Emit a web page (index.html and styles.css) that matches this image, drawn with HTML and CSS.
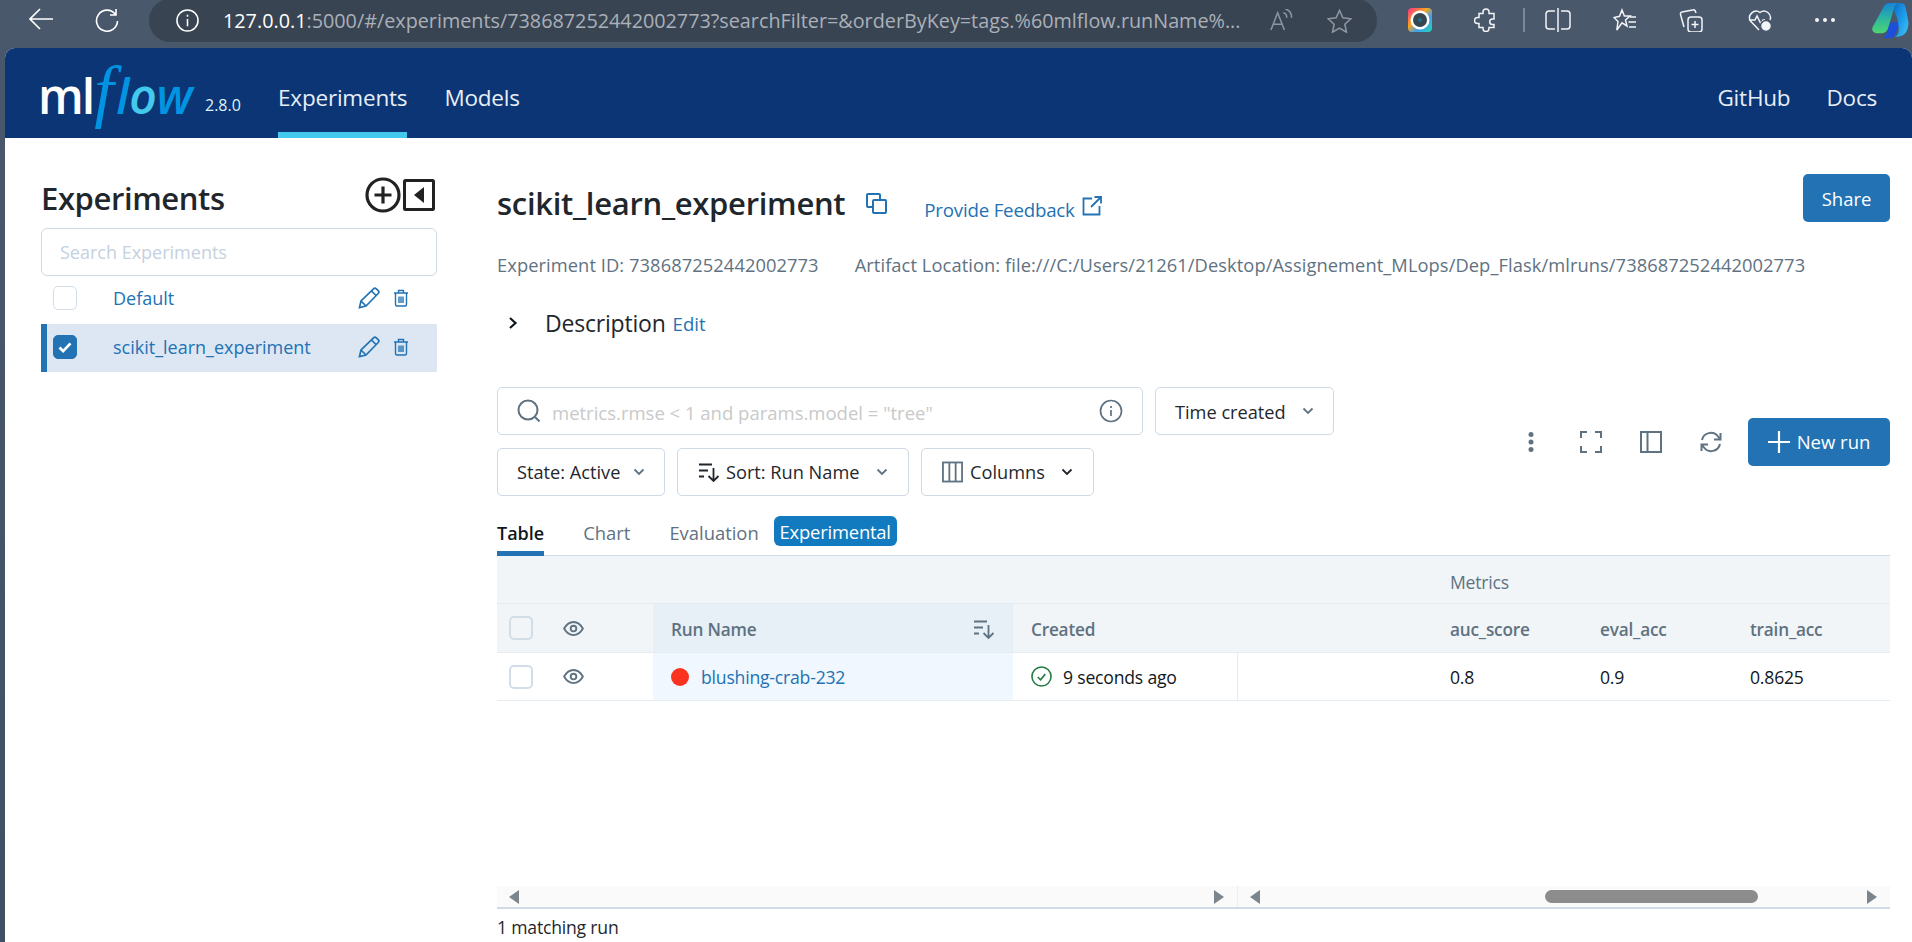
FILE: index.html
```html
<!DOCTYPE html>
<html lang="en">
<head>
<meta charset="utf-8">
<title>MLflow</title>
<link rel="stylesheet" href="styles.css">
</head>
<body>
<div class="chrome">
  <svg class="cicon back" viewBox="0 0 24 22"><path d="M24 11H1M11 1 1 11l10 10"/></svg>
  <svg class="cicon reload" viewBox="0 0 24 24"><path d="M20.5 6.5A10.5 10.5 0 1 0 22.5 13M21 1v6h-6"/></svg>
  <div class="pill">
    <svg class="cicon info" viewBox="0 0 24 24"><circle cx="12" cy="12" r="11"/><path d="M12 10.5V18M12 6v2"/></svg>
    <div class="url"><span class="host">127.0.0.1</span>:5000/#/experiments/738687252442002773?searchFilter=&amp;orderByKey=tags.%60mlflow.runName%...</div>
    <svg class="cicon dim readaloud" viewBox="0 0 24 24"><path d="M1 22 8 4l7 18M3.500 16h9M14 4c2 .5 3.500 2.500 3.500 5M16 0c4 1 6.500 4.500 6.500 9"/></svg>
    <svg class="cicon dim star" viewBox="0 0 26 25"><path d="m13 1.500 3.500 7.700 8.300 1-6.200 5.700 1.700 8.300-7.300-4.200-7.300 4.200 1.700-8.300L1.200 10.200l8.300-1z"/></svg>
  </div>
  <div class="exts">
    <svg class="ext" viewBox="0 0 24 24">
      <defs><linearGradient id="rb" x1="0" y1="0" x2="1" y2="1"><stop offset="0" stop-color="#ff2d8a"/><stop offset=".4" stop-color="#f9a61a"/><stop offset=".65" stop-color="#3fa0f0"/><stop offset="1" stop-color="#1fd8b0"/></linearGradient></defs>
      <rect width="24" height="24" rx="4" fill="url(#rb)"/><circle cx="12" cy="12" r="9.500" fill="#fff"/><circle cx="12" cy="12" r="7" fill="#37474f"/><circle cx="12" cy="12" r="2" fill="#1a6f8f"/>
    </svg>
    <svg class="ext line" viewBox="0 0 24 24"><path d="M9 4.500a3 3 0 1 1 6 0V6h5v5.500h-1.500a2.800 2.800 0 1 0 0 5.600H20V20h-5v1a3 3 0 1 1-6 0v-1H5v-4H3.500a3 3 0 1 1 0-6H5V6h4z" transform="translate(0 -.5)"/></svg>
    <span class="sep"></span>
    <svg class="ext line wide" viewBox="0 0 26 24"><path d="M13 0v24M10 3H4a3 3 0 0 0-3 3v12a3 3 0 0 0 3 3h6M16 3h6a3 3 0 0 1 3 3v12a3 3 0 0 1-3 3h-6"/></svg>
    <svg class="ext line" viewBox="0 0 24 24"><path d="m9 2 2.400 6H17l-4.500 4L14 18l-5-3.200L3.800 22l1.200-8.500L1 9.500l5.500-1.200zM17 9h6M15.500 14H23M16 19h7"/></svg>
    <svg class="ext line" viewBox="0 0 24 24"><rect x="9" y="9" width="14" height="15" rx="3"/><path d="M16 13v7M12.500 16.500h7M17 5l-1-2.500A2 2 0 0 0 13.500 2L3 4a2 2 0 0 0-1.500 2.500L5 19"/></svg>
    <svg class="ext line heart" viewBox="0 0 24 24"><path d="M11 22 2.500 13A6.500 6.500 0 0 1 12 4.500 6.500 6.500 0 0 1 22 12M1 12h6l2-4 4 8 2-4h2"/><circle class="fillw" cx="18" cy="18" r="5.500"/></svg>
    <div class="dots"><i></i><i></i><i></i></div>
    <svg class="copilot" viewBox="0 0 38 36">
      <defs>
        <linearGradient id="c1" x1="0" y1="0" x2="0" y2="1"><stop offset="0" stop-color="#1583d8"/><stop offset=".5" stop-color="#2cb5a0"/><stop offset="1" stop-color="#4fd672"/></linearGradient>
        <linearGradient id="c2" x1="0" y1="0" x2="1" y2="1"><stop offset="0" stop-color="#0c6fc4"/><stop offset=".5" stop-color="#1c9bea"/><stop offset="1" stop-color="#45c3f5"/></linearGradient>
      </defs>
      <path fill="#1d4fd8" d="M15 20h14l-4 11c-1 3-3 5-6 5h-8c3-1 4-3 5-6z"/>
      <path fill="url(#c1)" d="M13 3c1-2 3-3 6-3h9c-3 1-4 3-5 6l-6 20c-1 3-3 5-6 5H5c-3 0-5-3-4-6z"/>
      <path fill="url(#c2)" d="M28 0c4 0 6 1 7 4l3 16c0 7-3 13-8 14-2 1-4 1-6 1 3-2 4-4 4-8 0-5-1-9-2-12l-3-8c0-3 2-6 5-7z"/>
    </svg>
  </div>
</div>

<div class="page">
  <header class="topbar">
    <div class="logo"><span class="ml">ml</span><span class="flow"><span class="flow-f">f</span>l<span class="flow-o">o</span>w</span></div>
    <span class="version">2.8.0</span>
    <nav class="nav">
      <a class="nav-link active">Experiments</a>
      <a class="nav-link">Models</a>
    </nav>
    <nav class="nav-right">
      <a class="nav-link">GitHub</a>
      <a class="nav-link">Docs</a>
    </nav>
  </header>

  <div class="content">
    <aside class="sidebar">
      <div class="side-head">
        <h1 class="side-title">Experiments</h1>
        <svg class="side-plus" viewBox="0 0 36 36"><circle cx="18" cy="18" r="16" /><path d="M18 9.500v17M9.500 18h17"/></svg>
        <svg class="side-collapse" viewBox="0 0 32 32"><rect x="1.500" y="1.500" width="29" height="29" rx="1"/><path class="solid" d="M21 8v16l-10-8z"/></svg>
      </div>
      <div class="side-search">Search Experiments</div>
      <div class="exp-row">
        <span class="check"></span>
        <a class="exp-name">Default</a>
        <svg class="pencil" viewBox="0 0 22 22"><path d="M1.500 20.500 3 14 15.500 1.800a2 2 0 0 1 2.800 0l1.900 1.900a2 2 0 0 1 0 2.800L8 19zM3 14l5 5M13.500 4l4.500 4.500"/></svg>
        <svg class="trash" viewBox="0 0 16 18"><path d="M1 4h14M5.500 4V1.500h5V4M2.500 4v11.500a1.500 1.500 0 0 0 1.500 1.500h8a1.500 1.500 0 0 0 1.500-1.500V4M6 7.500V14M8 7.500V14M10 7.500V14"/></svg>
      </div>
      <div class="exp-row selected">
        <span class="check checked"><svg viewBox="0 0 24 24"><path d="m6 12.500 4 4 8-8.500"/></svg></span>
        <a class="exp-name">scikit_learn_experiment</a>
        <svg class="pencil" viewBox="0 0 22 22"><path d="M1.500 20.500 3 14 15.500 1.800a2 2 0 0 1 2.800 0l1.900 1.900a2 2 0 0 1 0 2.800L8 19zM3 14l5 5M13.500 4l4.500 4.500"/></svg>
        <svg class="trash" viewBox="0 0 16 18"><path d="M1 4h14M5.500 4V1.500h5V4M2.500 4v11.500a1.500 1.500 0 0 0 1.500 1.500h8a1.500 1.500 0 0 0 1.500-1.500V4M6 7.500V14M8 7.500V14M10 7.500V14"/></svg>
      </div>
    </aside>

    <main class="main">
      <div class="exp-head">
        <h2 class="exp-title">scikit_learn_experiment</h2>
        <svg class="copy" viewBox="0 0 21 21"><rect x="1" y="1" width="13" height="13" rx="1"/><rect x="7" y="7" width="13" height="13" rx="1" /></svg>
        <a class="feedback">Provide Feedback</a>
        <svg class="external" viewBox="0 0 20 20"><path d="M10 2.500H1.500v16h16V10M12.500 1H19v6.500M19 1 9 11"/></svg>
        <button class="btn-primary share">Share</button>
      </div>
      <div class="meta">
        <span>Experiment ID: 738687252442002773</span>
        <span>Artifact Location: file:///C:/Users/21261/Desktop/Assignement_MLops/Dep_Flask/mlruns/738687252442002773</span>
      </div>
      <div class="desc">
        <svg class="chev-right" viewBox="0 0 12 14"><path d="m3 2 5.500 5L3 12"/></svg>
        <span class="desc-label">Description</span>
        <a class="desc-edit">Edit</a>
      </div>

      <div class="controls">
        <div class="control-rows">
          <div class="control-row">
            <div class="search">
              <svg class="search-ico" viewBox="0 0 24 24"><circle cx="11" cy="11" r="9.500"/><path d="m18 18 4.500 4.500"/></svg>
              <span class="search-ph">metrics.rmse &lt; 1 and params.model = "tree"</span>
              <svg class="search-info" viewBox="0 0 24 24"><circle cx="12" cy="12" r="10.500"/><path d="M12 11v6M12 7v2"/></svg>
            </div>
            <div class="select time"><span>Time created</span><svg class="chev" viewBox="0 0 12 8"><path d="m1.500 1.500 4.500 4.500 4.500-4.500"/></svg></div>
          </div>
          <div class="control-row">
            <div class="select state"><span>State: Active</span><svg class="chev" viewBox="0 0 12 8"><path d="m1.500 1.500 4.500 4.500 4.500-4.500"/></svg></div>
            <div class="select sort">
              <svg class="sort-ico" viewBox="0 0 22 20"><path d="M1 2.500h13M1 8.500h9M1 14.500h5M15.500 6v13M10.500 14l5 5 5-5"/></svg>
              <span>Sort: Run Name</span><svg class="chev" viewBox="0 0 12 8"><path d="m1.500 1.500 4.500 4.500 4.500-4.500"/></svg>
            </div>
            <div class="select columns">
              <svg class="col-ico" viewBox="0 0 22 22"><rect x="1" y="1" width="20" height="20"/><path d="M7.700 1v20M14.300 1v20"/></svg>
              <span>Columns</span><svg class="chev dark" viewBox="0 0 12 8"><path d="m1.500 1.500 4.500 4.500 4.500-4.500"/></svg>
            </div>
          </div>
        </div>
        <div class="tools">
          <svg class="tool dotsv" viewBox="0 0 6 20"><circle cx="3" cy="2.500" r="2.500"/><circle cx="3" cy="10" r="2.500"/><circle cx="3" cy="17.500" r="2.500"/></svg>
          <svg class="tool" viewBox="0 0 22 22"><path d="M1 7V1h6M15 1h6v6M21 15v6h-6M7 21H1v-6"/></svg>
          <svg class="tool" viewBox="0 0 22 22"><rect x="1" y="1" width="20" height="20"/><path d="M7.500 1v20"/></svg>
          <svg class="tool" viewBox="0 0 22 22"><path d="M2 9a9 9 0 0 1 16-3.500L20 8M20 13a9 9 0 0 1-16 3.500L2 14M20.500 2v6.500H14M1.500 20v-6.500H8"/></svg>
          <button class="btn-primary new-run"><svg class="plus" viewBox="0 0 22 22"><path d="M11 0v22M0 11h22"/></svg>New run</button>
        </div>
      </div>

      <div class="tabs">
        <a class="tab active">Table</a>
        <a class="tab">Chart</a>
        <a class="tab">Evaluation</a>
        <span class="badge">Experimental</span>
      </div>

      <div class="table">
        <div class="trow group">
          <div class="cell span-blank"></div>
          <div class="cell metric">Metrics</div>
          <div class="cell"></div>
          <div class="cell"></div>
        </div>
        <div class="trow head">
          <div class="cell first"><span class="check box"></span><svg class="eye" viewBox="0 0 22 16"><path d="M1 8c2.500-4.500 6-7 10-7s7.500 2.500 10 7c-2.500 4.500-6 7-10 7S3.500 12.500 1 8z"/><circle cx="11" cy="8" r="3"/></svg></div>
          <div class="cell runname head-sel">Run Name<svg class="sort-mini" viewBox="0 0 22 20"><path d="M1 2.500h13M1 8.500h9M1 14.500h5M15.500 6v13M10.500 14l5 5 5-5"/></svg></div>
          <div class="cell runname">Created</div>
          <div class="cell"></div>
          <div class="cell metric">auc_score</div>
          <div class="cell metric">eval_acc</div>
          <div class="cell metric">train_acc</div>
        </div>
        <div class="trow body">
          <div class="cell first"><span class="check box"></span><svg class="eye" viewBox="0 0 22 16"><path d="M1 8c2.500-4.500 6-7 10-7s7.500 2.500 10 7c-2.500 4.500-6 7-10 7S3.500 12.500 1 8z"/><circle cx="11" cy="8" r="3"/></svg></div>
          <div class="cell runname body-sel"><span class="dot"></span><a class="run-link">blushing-crab-232</a></div>
          <div class="cell runname created"><svg class="ok" viewBox="0 0 22 22"><circle cx="11" cy="11" r="10"/><path d="m7 11.500 3 3 5-6"/></svg>9 seconds ago</div>
          <div class="cell"></div>
          <div class="cell metric">0.8</div>
          <div class="cell metric">0.9</div>
          <div class="cell metric">0.8625</div>
        </div>
        <div class="table-fill"></div>
        <div class="scrollbars">
          <div class="sb sb-left"><span class="arr arr-l"></span><span class="arr arr-r"></span></div>
          <div class="sb sb-right"><span class="arr arr-l"></span><span class="thumb"></span><span class="arr arr-r"></span></div>
        </div>
      </div>
      <div class="footer">1 matching run</div>
    </main>
  </div>
</div>
</body>
</html>
```
FILE: styles.css
```css
* { box-sizing: border-box; }
html, body { height: 100%; }
body {
  margin: 0;
  height: 100vh;
  overflow: hidden;
  display: flex;
  flex-direction: column;
  background: linear-gradient(#4a586c, #3f5066);
  font-family: "Open Sans", "Noto Sans", sans-serif;
  font-size: 15px;
  color: #11171c;
}
a { color: #2272b4; text-decoration: none; }
h1, h2 { margin: 0; }

/* browser chrome */
.chrome { height: 48px; flex: none; display: flex; align-items: flex-start; }
.cicon { fill: none; stroke: #fff; stroke-width: 1.6; flex: none; }
.cicon.dim { stroke: #8f96a0; }
.back { width: 24px; height: 22px; margin: 8px 0 0 29px; }
.reload { width: 24px; height: 24px; margin: 8px 0 0 42px; }
.pill {
  width: 1228px; height: 43px; margin: -1px 0 0 30px;
  background: #394453;
  border-radius: 21px;
  display: flex; align-items: center;
}
.info { width: 23px; height: 23px; margin-left: 27px; }
.url { margin-left: 24px; width: 1022px; flex: none; font-size: 19.800px; color: #aab0b8; white-space: nowrap; overflow: hidden; }
.host { color: #fff; }
.readaloud { width: 23px; height: 23px; margin-left: 25px; }
.star { width: 25px; height: 24px; margin-left: 34px; }
.exts { display: flex; align-items: center; height: 40px; margin-left: 31px; gap: 42px; }
.ext { width: 24px; height: 24px; flex: none; }
.ext.wide { width: 26px; }
.ext.line { fill: none; stroke: #f2f4f6; stroke-width: 1.5; }
.ext .fillw { fill: #f2f4f6; stroke: #4a586c; }
.ext.heart { margin-left: 3px; }
.sep { width: 2px; height: 24px; background: #7d8896; margin: 0 -22px 0 -17px; flex: none; }
.dots { display: flex; gap: 4px; width: 22px; margin-left: 1px; }
.dots i { width: 4px; height: 4px; border-radius: 50%; background: #f2f4f6; }
.copilot { width: 38px; height: 35px; margin-left: -8px; flex: none; }

/* page */
.page { flex: 1; min-height: 0; margin-left: 5px; background: #fff; border-radius: 10px 10px 0 0; display: flex; flex-direction: column; overflow: hidden; }
.topbar { height: 90px; flex: none; background: #0b3574; display: flex; align-items: stretch; padding: 0 35px 0 36px; color: #fff; }
.logo { width: 167px; margin-left: -3px; display: flex; align-items: baseline; margin-top: 6px; font-size: 48px; line-height: 84px; white-space: nowrap; }
.ml { font-weight: 600; color: #fff; letter-spacing: -2px; }
.flow { font-style: italic; font-weight: 600; color: #0194e2; letter-spacing: -.3px; margin-left: 1px; }
.flow-f { font-family: "Liberation Serif", serif; font-size: 70px; line-height: 0; font-weight: 400; margin-right: 3px; }
.flow-o { color: #43c9ed; }
.version { font-size: 16px; color: #dff3fc; align-self: center; margin: 24px 0 0 0; width: 73px; }
.nav { display: flex; gap: 37px; }
.nav-right { display: flex; gap: 36px; margin-left: auto; }
.nav-link { color: #e8eef6; font-size: 22.500px; display: flex; align-items: center; border-bottom: 6px solid transparent; padding-top: 14px; letter-spacing: -.2px; }
.nav-link.active { border-bottom-color: #43c9ed; }

.content { flex: 1; min-height: 0; display: flex; }

/* sidebar */
.sidebar { width: 492px; flex: none; padding: 39px 60px 0 36px; }
.side-head { display: flex; align-items: center; height: 36px; }
.side-title { font-size: 31px; font-weight: 600; color: #1f272d; flex: 1; letter-spacing: -.4px; margin-top: 6px; }
.side-plus { width: 36px; height: 36px; fill: none; stroke: #222; stroke-width: 3.200; flex: none; }
.side-collapse { width: 32px; height: 32px; fill: none; stroke: #222; stroke-width: 3; margin: 0 2px 0 2px; flex: none; }
.side-collapse .solid { fill: #222; stroke: none; }
.side-search { height: 48px; margin-top: 15px; border: 1px solid #cdd9e5; border-radius: 6px; padding: 0 18px; display: flex; align-items: center; color: #c4d1de; font-size: 18px; }
.exp-row { height: 48px; display: flex; align-items: center; padding: 0 28px 4px 12px; font-size: 18px; }
.exp-row.selected { background: #dce7f3; border-left: 6px solid #2272b4; padding: 0 28px 2px 6px; }
.check { width: 24px; height: 24px; border: 1.500px solid #d3dde7; border-radius: 5px; background: #fff; flex: none; display: flex; }
.check.checked { background: #2272b4; border-color: #2272b4; }
.check svg { fill: none; stroke: #fff; stroke-width: 3; width: 100%; height: 100%; }
.exp-name { flex: 1; margin-left: 36px; }
.pencil { width: 22px; height: 22px; fill: none; stroke: #2272b4; stroke-width: 1.700; flex: none; }
.trash { width: 16px; height: 18px; fill: none; stroke: #2272b4; stroke-width: 1.400; margin-left: 13px; flex: none; }

/* main */
.main { flex: 1; min-width: 0; padding-right: 22px; display: flex; flex-direction: column; }
.exp-head { display: flex; align-items: center; height: 48px; margin-top: 36px; }
.exp-title { font-size: 31px; font-weight: 600; color: #1f272d; letter-spacing: -.3px; margin-top: 10px; }
.copy { width: 21px; height: 21px; fill: #fff; stroke: #2272b4; stroke-width: 2; margin: 10px 0 0 21px; flex: none; }
.feedback { margin: 22px 0 0 37px; font-size: 18.700px; letter-spacing: -.2px; }
.external { width: 20px; height: 20px; fill: none; stroke: #2272b4; stroke-width: 1.800; margin: 16px 0 0 7px; flex: none; }
.btn-primary { background: #2272b4; color: #fff; border: 0; border-radius: 5px; font-family: inherit; font-size: 18.500px; display: flex; align-items: center; justify-content: center; }
.share { width: 87px; height: 48px; margin-left: auto; }
.meta { height: 22px; margin-top: 31px; display: flex; gap: 36px; align-items: center; color: #5f7281; font-size: 18.300px; letter-spacing: .08px; white-space: nowrap; }
.desc { height: 24px; margin-top: 36px; display: flex; align-items: center; }
.chev-right { width: 12px; height: 14px; fill: none; stroke: #11171c; stroke-width: 2.200; margin-left: 10px; }
.desc-label { font-size: 23px; margin-left: 26px; letter-spacing: -.2px; color: #1f272d; }
.desc-edit { font-size: 18.500px; margin-left: 7px; }

.controls { margin-top: 52px; height: 109px; display: flex; align-items: center; justify-content: space-between; }
.control-rows { display: flex; flex-direction: column; gap: 13px; }
.control-row { display: flex; gap: 12px; }
.search, .select { height: 48px; border: 1px solid #cdd9e5; border-radius: 5px; display: flex; align-items: center; background: #fff; white-space: nowrap; font-size: 18.200px; color: #1f272d; }
.search { width: 646px; padding: 0 19px 0 19px; }
.search-ico { width: 24px; height: 24px; fill: none; stroke: #5f7281; stroke-width: 2; flex: none; }
.search-ph { flex: 1; margin: 2px 0 0 11px; color: #c9c9c9; font-size: 18.500px; }
.search-info { width: 24px; height: 24px; fill: none; stroke: #5f7281; stroke-width: 1.700; flex: none; }
.select { padding: 0 19px; }
.time { width: 179px; justify-content: space-between; }
.time span { margin-top: 2px; }
.state { width: 168px; justify-content: space-between; }
.sort { width: 232px; padding: 0 20px; gap: 6px; }
.columns { width: 173px; padding: 0 20px; gap: 7px; }
.sort .chev, .columns .chev { margin-left: auto; }
.chev { width: 12px; height: 8px; fill: none; stroke: #5f7281; stroke-width: 1.800; flex: none; }
.chev.dark { stroke: #1f272d; }
.sort-ico { width: 22px; height: 20px; fill: none; stroke: #1f272d; stroke-width: 1.800; flex: none; }
.col-ico { width: 21px; height: 24px; fill: none; stroke: #5f7281; stroke-width: 1.900; flex: none; }
.tools { display: flex; align-items: center; }
.tool { width: 22px; height: 22px; fill: none; stroke: #5f7281; stroke-width: 2; margin-right: 38px; flex: none; }
.tool.dotsv { width: 6px; height: 20px; fill: #5f7281; stroke: none; margin-right: 46px; }
.new-run { width: 142px; height: 48px; margin-left: -12px; gap: 7px; }
.plus { width: 22px; height: 22px; stroke: #fff; stroke-width: 2.200; fill: none; flex: none; }

.tabs { margin-top: 21px; height: 39px; display: flex; align-items: stretch; gap: 39px; border-bottom: 1px solid #d1dbe5; font-size: 18.400px; position: relative; }
.tab { color: #5f7281; display: flex; align-items: center; height: 39px; padding-bottom: 3px; border-bottom: 5px solid transparent; }
.tab.active { color: #11171c; font-weight: 600; font-size: 18px; border-bottom-color: #2272b4; }
.badge { background: #127abe; color: #fff; border-radius: 6px; height: 30px; width: 123px; justify-content: center; display: flex; align-items: center; margin: -1px 0 0 -27px; white-space: nowrap; letter-spacing: -.2px; }
.tab + .badge { margin-left: -24px; }

.table { flex: 1; min-height: 0; display: flex; flex-direction: column; font-size: 17.600px; letter-spacing: -.2px; }
.trow { display: grid; grid-template-columns: 156px 360px 225px 200px 150px 150px 152px; flex: none; }
.trow.group { height: 48px; padding-top: 4px; background: #f1f5f8; border-bottom: 1px solid #e4ebf1; color: #5f7281; font-weight: 500; font-size: 17.600px; }
.span-blank { grid-column: 1 / 5; }
.trow.head { height: 49px; background: #f1f5f8; border-bottom: 1.500px solid #e4ebf1; color: #5f7281; font-weight: 600; font-size: 17.200px; }
.head .runname, .head .metric { padding-top: 2px; }
.trow.body { height: 48px; border-bottom: 1.500px solid #e4ebf1; }
.cell { display: flex; align-items: center; min-width: 0; }
.first { padding-left: 12px; gap: 30px; }
.check.box { width: 24px; height: 24px; border-width: 2px; }
.head .check.box { background: #f1f5f8; }
.eye { width: 21px; height: 15px; fill: none; stroke: #5f7281; stroke-width: 2; flex: none; }
.runname { padding-left: 18px; }
.metric { padding-left: 12px; }
.head-sel { background: #e7eff7; justify-content: space-between; padding-right: 18px; }
.sort-mini { width: 22px; height: 20px; fill: none; stroke: #5f7281; stroke-width: 1.800; flex: none; }
.body-sel { background: #f0f7fe; gap: 12px; }
.dot { width: 18px; height: 18px; background: #fa3320; border-radius: 50%; flex: none; }
.created { gap: 11px; border-right: 1px solid #e4ebf1; }
.ok { width: 21px; height: 21px; fill: none; stroke: #277c43; stroke-width: 1.700; flex: none; }
.table-fill { flex: 1; }
.scrollbars { height: 23px; flex: none; display: flex; background: #fafafa; border-bottom: 2px solid #d1dbe5; }
.sb { display: flex; align-items: center; justify-content: space-between; }
.sb-left { width: 741px; padding: 0 13px 0 12px; border-right: 1px solid #eee; }
.sb-right { flex: 1; padding: 0 13px 0 12px; }
.arr { width: 0; height: 0; border-top: 7px solid transparent; border-bottom: 7px solid transparent; flex: none; }
.arr-l { border-right: 10px solid #7d858c; }
.arr-r { border-left: 10px solid #7d858c; }
.thumb { width: 213px; height: 13px; border-radius: 7px; background: #8c8c8c; margin-left: 284px; margin-right: 109px; flex: none; }
.footer { height: 33px; flex: none; display: flex; align-items: center; font-size: 17.600px; letter-spacing: -.2px; color: #1f272d; padding-top: 2px; }
```
